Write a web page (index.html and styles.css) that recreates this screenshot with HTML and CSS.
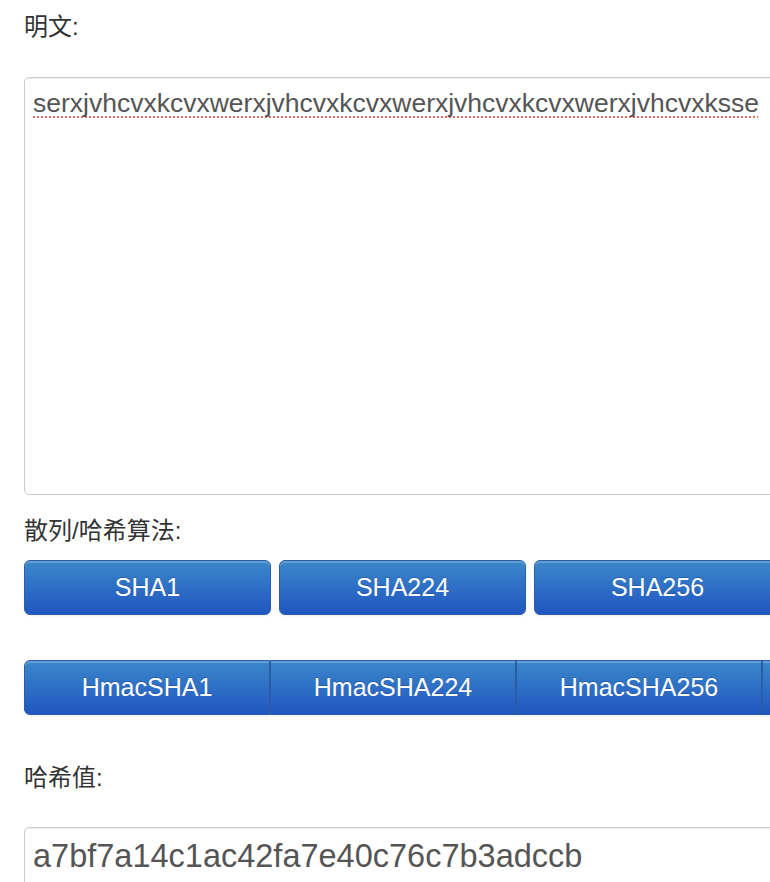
FILE: index.html
```html
<!DOCTYPE html>
<html lang="zh">
<head>
<meta charset="utf-8">
<title>散列/哈希</title>
<link rel="stylesheet" href="styles.css">
</head>
<body>
<div class="page">
  <div class="label label-plain">明文:</div>
  <div class="textarea"><span class="misspelled">serxjvhcvxkcvxwerxjvhcvxkcvxwerxjvhcvxkcvxwerxjvhcvxksse</span></div>

  <div class="label label-algo">散列/哈希算法:</div>
  <div class="btn-row">
    <button class="btn">SHA1</button>
    <button class="btn">SHA224</button>
    <button class="btn">SHA256</button>
  </div>

  <div class="btn-group">
    <button class="btn">HmacSHA1</button>
    <button class="btn">HmacSHA224</button>
    <button class="btn">HmacSHA256</button>
    <button class="btn">HmacSHA384</button>
  </div>

  <div class="label label-hash">哈希值:</div>
  <div class="input">a7bf7a14c1ac42fa7e40c76c7b3adccb</div>
</div>
</body>
</html>
```

FILE: styles.css
```css
html, body {
  margin: 0;
  padding: 0;
  overflow: hidden;
  background: #fff;
}

.page {
  padding: 12px 0 0 24px;
  font-family: "Liberation Sans", "Noto Sans CJK SC", sans-serif;
  color: #333;
  width: 1100px;
}

.label {
  font-size: 24px;
  line-height: 30px;
  height: 30px;
  color: #333;
}

.label-plain { margin-bottom: 35px; }
.label-algo { margin-top: 21px; margin-bottom: 14px; }
.label-hash { margin-top: 48px; margin-bottom: 34px; }

.textarea {
  box-sizing: border-box;
  width: 900px;
  height: 418px;
  border: 1px solid #cccccc;
  border-radius: 5px;
  box-shadow: inset 0 1px 1px rgba(0, 0, 0, 0.075);
  padding: 9px 8px;
  font-size: 26.5px;
  line-height: 32px;
  color: #555;
  white-space: nowrap;
}

.misspelled {
  text-decoration-line: underline;
  text-decoration-style: dotted;
  text-decoration-color: #f2655c;
  text-decoration-thickness: 2px;
  text-decoration-skip-ink: none;
  text-underline-offset: 4px;
}

.btn-row {
  display: flex;
  gap: 8px;
}

.btn {
  box-sizing: border-box;
  width: 247px;
  height: 55px;
  flex: none;
  margin: 0;
  padding: 0;
  font-family: "Liberation Sans", sans-serif;
  font-size: 25px;
  color: #fff;
  text-shadow: 0 -1px 0 rgba(0, 0, 0, 0.2);
  background-image: linear-gradient(to bottom, #3b88ca, #2156c1);
  border: 1px solid #2a5ea9;
  border-radius: 6px;
  box-shadow: inset 0 2px 0 rgba(255, 255, 255, 0.2), 0 1px 2px rgba(0, 0, 0, 0.08);
}

.btn-group {
  display: flex;
  margin-top: 45px;
}

.btn-group .btn {
  width: 246px;
  border-radius: 0;
}

.btn-group .btn + .btn {
  border-left: 1px solid #2a5fa8;
}

.btn-group .btn:first-child {
  border-radius: 6px 0 0 6px;
}

.input {
  box-sizing: border-box;
  width: 900px;
  height: 80px;
  border: 1px solid #cccccc;
  border-radius: 5px;
  box-shadow: inset 0 1px 1px rgba(0, 0, 0, 0.075);
  padding: 8px 8px;
  font-size: 32.5px;
  line-height: 40px;
  color: #555;
  white-space: nowrap;
}
```
